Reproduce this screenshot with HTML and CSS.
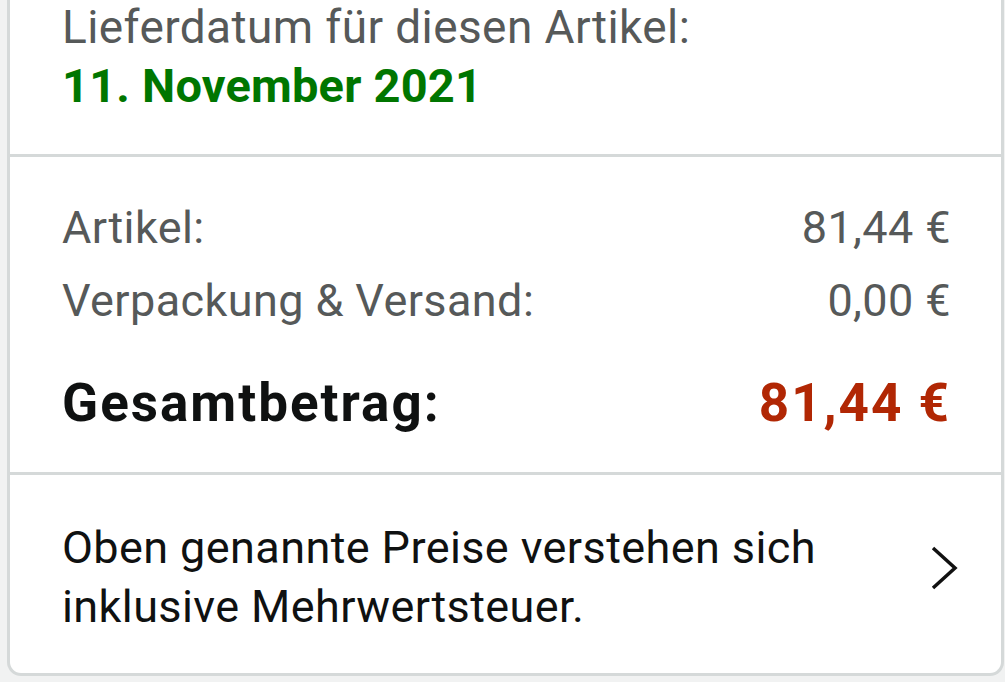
FILE: index.html
```html
<!DOCTYPE html>
<html lang="de">
<head>
  <meta charset="UTF-8" />
  <meta name="viewport" content="width=device-width, initial-scale=1.0"/>
  <title>Bestellübersicht</title>
  <link rel="stylesheet" href="styles.css">
</head>
<body>
  <div class="card">
    <div class="section delivery">
      <p class="label">Lieferdatum für diesen Artikel:</p>
      <p class="date">11. November 2021</p>
    </div>
    <div class="section summary">
      <div class="row">
        <span>Artikel:</span>
        <span>81,44 €</span>
      </div>
      <div class="row">
        <span>Verpackung &amp; Versand:</span>
        <span>0,00 €</span>
      </div>
      <div class="row total">
        <span>Gesamtbetrag:</span>
        <span class="price">81,44 €</span>
      </div>
    </div>
    <a class="section note" href="#">
      <span>Oben genannte Preise verstehen sich inklusive Mehrwertsteuer.</span>
      <svg class="chevron" width="30" height="44" viewBox="0 0 30 44">
        <polyline points="4,2 26,22 4,42" fill="none" stroke="#111" stroke-width="3.5"/>
      </svg>
    </a>
  </div>
</body>
</html>
```

FILE: styles.css
```css
body {
  font-family: Roboto, "Noto Sans", sans-serif;
  margin: 0;
  padding: 0;
  background: #f1f2f2;
  font-size: 45px;
  letter-spacing: 0.4px;
}
.card {
  margin-left: 7px;
  width: 991px;
  background: white;
  border: 3px solid #d5d9d9;
  border-top: none;
  border-radius: 0 0 14px 14px;
}
.section {
  padding: 0 50px 0 52px;
}
.section + .section {
  border-top: 3px solid #d5d9d9;
}
.delivery {
  padding-bottom: 37px;
}
.delivery p {
  margin: 0;
}
.label {
  color: #565959;
  font-size: 46px;
  line-height: 54px;
}
.date {
  color: #007600;
  font-size: 47px;
  font-weight: bold;
  line-height: 63px;
  letter-spacing: 0.2px;
}
.summary {
  padding-top: 34px;
  padding-bottom: 29px;
}
.row {
  display: flex;
  justify-content: space-between;
  color: #565959;
  line-height: 73px;
}
.total {
  margin-top: 26px;
  color: #0f1111;
  font-size: 53px;
  font-weight: bold;
  line-height: 80px;
  letter-spacing: 2px;
}
.price {
  color: #b12704;
}
.note {
  display: flex;
  align-items: flex-start;
  justify-content: space-between;
  color: #0f1111;
  text-decoration: none;
  line-height: 59px;
  padding-top: 43px;
  padding-bottom: 37px;
  padding-right: 42px;
}
.note span {
  max-width: 820px;
}
.chevron {
  margin-top: 28px;
}
```
